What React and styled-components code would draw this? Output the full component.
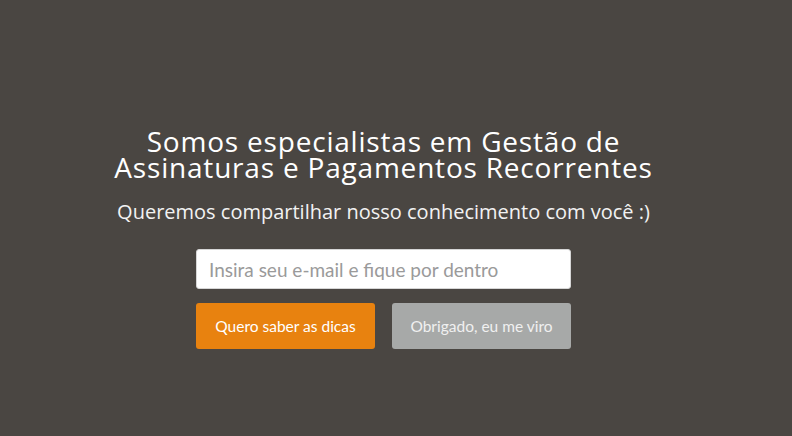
import React from 'react'
import styled, { createGlobalStyle } from 'styled-components'

const GlobalStyle = createGlobalStyle`
    html, body {
        margin: 0;
        padding: 0;
        background: #4a4642;
    }
`

const Page = () => {
    return (
        <Hero>
            <Content>
                <Title>
                    Somos especialistas em Gestão de<br />
                    Assinaturas e Pagamentos Recorrentes
                </Title>
                <Subtitle>Queremos compartilhar nosso conhecimento com você :)</Subtitle>
                <Form onSubmit={(e) => e.preventDefault()}>
                    <EmailInput type="email" placeholder="Insira seu e-mail e fique por dentro" />
                    <ButtonRow>
                        <Button variant="primary">Quero saber as dicas</Button>
                        <Button variant="secondary" type="button">Obrigado, eu me viro</Button>
                    </ButtonRow>
                </Form>
            </Content>
        </Hero>
    )
}

const Hero = styled.div`
    width: 792px;
    height: 436px;
    background: #4a4642;
    display: flex;
    padding-right: 25px;
    box-sizing: border-box;
`

const Content = styled.div`
    flex: 1;
    display: flex;
    flex-direction: column;
    align-items: center;
    padding-top: 128px;
`

const Title = styled.h1`
    margin: 0;
    font-family: "Open Sans", sans-serif;
    font-weight: 400;
    font-size: 28px;
    letter-spacing: 0.8px;
    line-height: 26px;
    color: #ffffff;
    text-align: center;
`

const Subtitle = styled.p`
    margin: 20px 0 0;
    font-family: "Open Sans", sans-serif;
    font-size: 20px;
    line-height: 24px;
    color: #f2f2f2;
    text-align: center;
`

const Form = styled.form`
    margin-top: 25px;
    width: 375px;
    display: flex;
    flex-direction: column;
    gap: 14px;
`

const EmailInput = styled.input`
    box-sizing: border-box;
    width: 100%;
    height: 40px;
    border: 1px solid #d6d6d6;
    border-radius: 3px;
    padding: 0 12px;
    font-family: Lato, sans-serif;
    font-size: 19px;
    color: #555;
    background: #fff;
    outline: none;

    &::placeholder {
        color: #9a9a9a;
    }
`

const ButtonRow = styled.div`
    display: flex;
    justify-content: space-between;
`

const Button = styled.button`
    width: 179px;
    height: 46px;
    border: none;
    border-radius: 3px;
    font-family: Lato, sans-serif;
    font-size: 15.5px;
    color: ${(p) => (p.variant === 'primary' ? '#ffffff' : '#f0f0f0')};
    background: ${(p) => (p.variant === 'primary' ? '#e8820f' : '#a7a9a8')};
    cursor: pointer;
`

const App = () => (
    <>
        <GlobalStyle />
        <Page />
    </>
)

export default App
